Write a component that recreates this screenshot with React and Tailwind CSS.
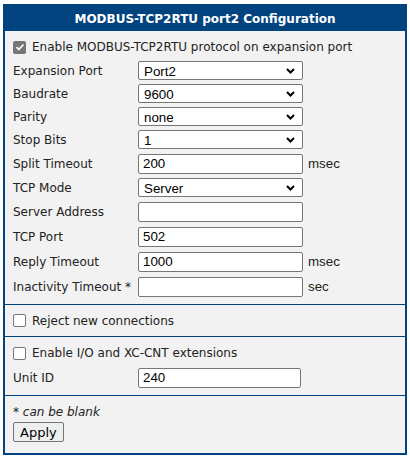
import { useState } from "react";

const font = "font-['DejaVu_Sans',Verdana,sans-serif]";
const inputFont = "font-['Liberation_Sans',Arial,sans-serif] text-[13.33px]";

const Chevron = () => (
  <svg
    className="pointer-events-none absolute right-[8px] top-1/2 -translate-y-1/2"
    width="9"
    height="6"
    viewBox="0 0 9 6"
  >
    <path d="M1 1l3.5 3.5L8 1" fill="none" stroke="#000" strokeWidth="2" />
  </svg>
);

const Select = ({ value, options }) => (
  <div className="relative w-[165px] h-[19px]">
    <select
      defaultValue={value}
      className={`appearance-none w-full h-full bg-white border border-[#767676] rounded-[2px] pl-[5px] text-black ${inputFont}`}
    >
      {options.map((o) => (
        <option key={o}>{o}</option>
      ))}
    </select>
    <Chevron />
  </div>
);

const Input = ({ value, w = "w-[165px]" }) => (
  <input
    defaultValue={value}
    className={`${w} h-[20px] bg-white border border-[#767676] rounded-[2px] px-[4px] text-black ${inputFont}`}
  />
);

const Row = ({ label, h = "h-[23px]", children, unit }) => (
  <div className={`flex items-center ${h}`}>
    <div className="w-[125px] shrink-0">{label}</div>
    {children}
    {unit && <span className={`ml-[5px] ${inputFont}`}>{unit}</span>}
  </div>
);

const Check = ({ checked, label }) => {
  const [on, setOn] = useState(checked);
  return (
    <label className="flex items-center gap-[6px]">
      <span
        onClick={() => setOn(!on)}
        className={`w-[13px] h-[13px] rounded-[2px] flex items-center justify-center ${
          on ? "bg-[#767676]" : "bg-white border border-[#767676]"
        }`}
      >
        {on && (
          <svg width="10" height="10" viewBox="0 0 10 10">
            <path d="M1.5 5.2l2.3 2.3L8.5 2.5" fill="none" stroke="#fff" strokeWidth="1.8" />
          </svg>
        )}
      </span>
      {label}
    </label>
  );
};

const App = () => {
  return (
    <div className={`pt-[4px] pl-[3px] ${font} text-[12px] text-[#222]`}>
      <div className="w-[404px] border-2 border-[#00437f] bg-[#f2f2f2]">
        <div className="h-[25px] bg-[#00437f] text-white font-bold text-[12px] flex items-center justify-center">
          MODBUS-TCP2RTU port2 Configuration
        </div>

        <div className="px-[8px] pt-[4px] pb-[5px] border-b border-[#00437f]">
          <div className="h-[24px] flex items-center">
            <Check checked label="Enable MODBUS-TCP2RTU protocol on expansion port" />
          </div>
          <Row label="Expansion Port">
            <Select value="Port2" options={["Port1", "Port2"]} />
          </Row>
          <Row label="Baudrate">
            <Select value="9600" options={["9600", "19200", "38400", "57600", "115200"]} />
          </Row>
          <Row label="Parity">
            <Select value="none" options={["none", "even", "odd"]} />
          </Row>
          <Row label="Stop Bits">
            <Select value="1" options={["1", "2"]} />
          </Row>
          <Row label="Split Timeout" h="h-[25px]" unit="msec">
            <Input value="200" />
          </Row>
          <Row label="TCP Mode">
            <Select value="Server" options={["Server", "Client"]} />
          </Row>
          <Row label="Server Address" h="h-[25px]">
            <Input value="" />
          </Row>
          <Row label="TCP Port" h="h-[25px]">
            <Input value="502" />
          </Row>
          <Row label="Reply Timeout" h="h-[25px]" unit="msec">
            <Input value="1000" />
          </Row>
          <Row label="Inactivity Timeout *" h="h-[25px]" unit="sec">
            <Input value="" />
          </Row>
        </div>

        <div className="h-[32px] px-[8px] flex items-center border-b border-[#00437f]">
          <Check checked={false} label="Reject new connections" />
        </div>

        <div className="px-[8px] pt-[4px] pb-[5px] border-b border-[#00437f]">
          <div className="h-[24px] flex items-center">
            <Check checked={false} label="Enable I/O and XC-CNT extensions" />
          </div>
          <Row label="Unit ID" h="h-[25px]">
            <Input value="240" w="w-[163px]" />
          </Row>
        </div>

        <div className="px-[8px] pt-[7px] pb-[11px]">
          <div className="h-[17px] italic">* can be blank</div>
          <button className="mt-[2px] h-[20px] px-[6px] bg-[#efefef] border border-[#767676] rounded-[2px] text-[13px] text-black">
            Apply
          </button>
        </div>
      </div>
    </div>
  );
};

export default App;
